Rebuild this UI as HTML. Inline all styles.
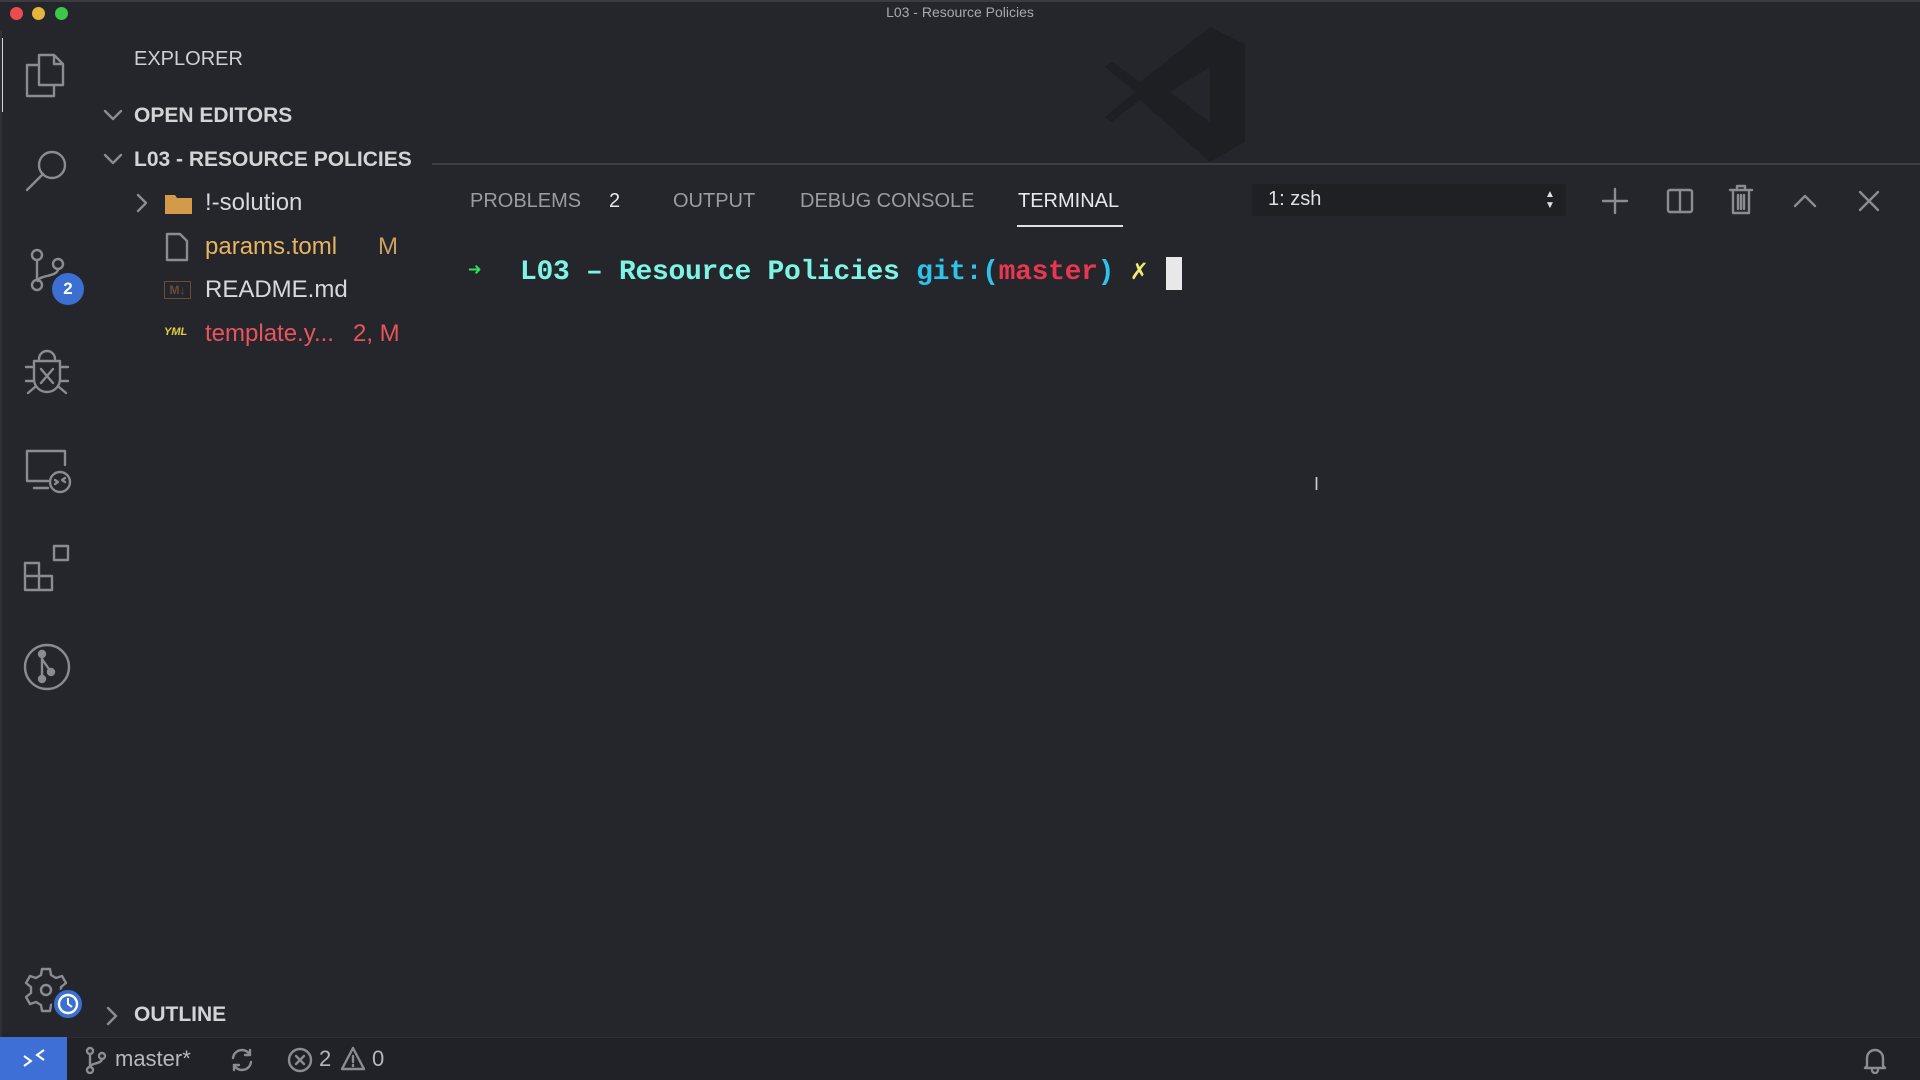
<!DOCTYPE html>
<html><head><meta charset="utf-8"><style>
*{margin:0;padding:0;box-sizing:border-box}
body{width:1920px;height:1080px;background:#24262c;font-family:"Liberation Sans",sans-serif;position:relative;overflow:hidden;color:#ccc}
.a{position:absolute;white-space:nowrap}
.ic{position:absolute;fill:none;stroke:#8a8c91;stroke-width:2.4;stroke-linecap:round;stroke-linejoin:round}
.sec{font-weight:bold;font-size:21px;color:#d4d4d6}
.row{font-size:24px;line-height:28px}
.tab{font-size:20px;color:#9a9ca0;top:190px}
.term{font-family:"Liberation Mono",monospace;font-weight:bold;font-size:28px;top:253px;letter-spacing:-0.3px}
</style></head><body>
<div class="a" style="left:0;top:0;width:1920px;height:30px;border-top:2px solid #3a3c42"></div>
<div class="a" style="left:10px;top:7px;width:13px;height:13px;border-radius:50%;background:#ee4b4f"></div>
<div class="a" style="left:32px;top:7px;width:13px;height:13px;border-radius:50%;background:#e6b43c"></div>
<div class="a" style="left:55px;top:7px;width:13px;height:13px;border-radius:50%;background:#3ec64a"></div>
<div class="a" style="left:0;width:1920px;top:4px;text-align:center;font-size:14px;color:#a8a9ad">L03 - Resource Policies</div>
<div class="a" style="left:0;top:38px;width:3px;height:74px;background:#d6d6d8"></div>
<div class="a" style="left:0;top:30px;width:2px;height:1008px;background:#2e3036"></div>
<svg class="a" style="left:1100px;top:22px" width="150" height="145" viewBox="0 0 150 145"><path d="M110 5 L145 22 L145 120 L110 140 L40 78 L12 100 L5 95 L35 70 L5 45 L12 40 L40 60 Z M110 45 L70 70 L110 100 Z" fill="#1d1f23" fill-rule="evenodd"/></svg>
<svg class="ic" style="left:22px;top:50px" width="50" height="50" viewBox="0 0 50 50" stroke="#c8c8ca"><path d="M17 5h15l9 9v21H17z M32 5v9h9 M17 15H5v31h27v-11"/></svg>
<svg class="ic" style="left:22px;top:145px" width="50" height="50" viewBox="0 0 50 50"><circle cx="30" cy="20" r="13"/><path d="M21 29L5 45"/></svg>
<svg class="ic" style="left:22px;top:245px" width="50" height="50" viewBox="0 0 50 50"><circle cx="15" cy="10" r="5"/><circle cx="36" cy="19" r="5"/><circle cx="15" cy="40" r="5"/><path d="M15 15v20 M36 24c0 8-20 6-20 12"/></svg>
<div class="a" style="left:52px;top:273px;width:32px;height:32px;border-radius:50%;background:#3c6fd2;color:#fff;font-weight:bold;font-size:17px;text-align:center;line-height:32px">2</div>
<svg class="ic" style="left:22px;top:347px" width="50" height="50" viewBox="0 0 50 50"><path d="M17 12a8 8 0 0 1 16 0 M12 14h26v18a13 13 0 0 1-26 0z M4 20h8 M38 20h8 M4 34h8 M38 34h8 M6 46l7-6 M44 46l-7-6 M19 22l12 14 M31 22l-12 14"/></svg>
<svg class="ic" style="left:22px;top:445px" width="50" height="50" viewBox="0 0 50 50"><path d="M26 36H5V6h38v14 M12 43h14"/><circle cx="38" cy="37" r="10"/><path d="M33 35l3 2-3 2 M43 33l-3 2 3 2"/></svg>
<svg class="ic" style="left:22px;top:543px" width="50" height="50" viewBox="0 0 50 50"><path d="M3 20h14v27H3z M3 33h27v14H17 M32 3h14v14H32z"/></svg>
<svg class="ic" style="left:22px;top:642px" width="50" height="50" viewBox="0 0 50 50"><circle cx="25" cy="25" r="22"/><path d="M20 12v25 M20 17l9 13"/><circle cx="20" cy="12" r="3" fill="#8a8c91"/><circle cx="29" cy="30" r="3" fill="#8a8c91"/><circle cx="20" cy="37" r="3" fill="#8a8c91"/></svg>
<svg class="ic" style="left:22px;top:966px" width="50" height="50" viewBox="0 0 50 50"><path d="M20 3h8l1 6 5 3 6-2 4 7-5 4v6l5 4-4 7-6-2-5 3-1 6h-8l-1-6-5-3-6 2-4-7 5-4v-6l-5-4 4-7 6 2 5-3z"/><circle cx="24" cy="24" r="5"/></svg>
<div class="a" style="left:52px;top:988px;width:32px;height:32px;border-radius:50%;background:#3c6fd2;border:2px solid #24262c"></div>
<svg class="a" style="left:56px;top:992px" width="24" height="24" viewBox="0 0 24 24"><circle cx="12" cy="12" r="9" fill="none" stroke="#fff" stroke-width="2.4"/><path d="M12 6v6l4 3" fill="none" stroke="#fff" stroke-width="2"/></svg>
<div class="a" style="left:134px;top:48px;font-size:20px;color:#d0d0d2">EXPLORER</div>
<svg class="ic" style="left:102px;top:105px" width="22" height="20" viewBox="0 0 22 20" stroke="#c8c8ca" stroke-width="2"><path d="M3 6l8 8 8-8"/></svg>
<div class="a sec" style="left:134px;top:104px">OPEN EDITORS</div>
<svg class="ic" style="left:102px;top:149px" width="22" height="20" viewBox="0 0 22 20" stroke="#c8c8ca" stroke-width="2"><path d="M3 6l8 8 8-8"/></svg>
<div class="a sec" style="left:134px;top:148px">L03 - RESOURCE POLICIES</div>
<svg class="ic" style="left:132px;top:192px" width="20" height="22" viewBox="0 0 20 22" stroke="#c8c8ca" stroke-width="2"><path d="M6 3l8 8-8 8"/></svg>
<svg class="a" style="left:165px;top:192px" width="27" height="22" viewBox="0 0 27 22"><path d="M0 3h10l2 3h15v16H0z" fill="#d39a4a"/></svg>
<div class="a row" style="left:205px;top:189px;color:#d8d8da">!-solution</div>
<svg class="ic" style="left:165px;top:232px" width="25" height="30" viewBox="0 0 25 30" stroke="#c8c8ca" stroke-width="2"><path d="M2 2h13l7 7v19H2z"/></svg>
<div class="a row" style="left:205px;top:233px;color:#e8b460">params.toml</div>
<div class="a row" style="left:378px;top:233px;color:#c9a062">M</div>
<div class="a" style="left:164px;top:281px;width:27px;height:18px;border:1px solid #6e4a38;color:#6e4a38;font-size:12px;font-weight:bold;text-align:center;line-height:16px">M↓</div>
<div class="a row" style="left:205px;top:276px;color:#d8d8da">README.md</div>
<div class="a" style="left:164px;top:326px;font-size:11px;font-weight:bold;color:#e0d040;font-style:italic">YML</div>
<div class="a row" style="left:205px;top:320px;color:#e8545c">template.y...</div>
<div class="a row" style="left:353px;top:320px;color:#e8545c">2, M</div>
<svg class="ic" style="left:102px;top:1005px" width="20" height="22" viewBox="0 0 20 22" stroke="#c8c8ca" stroke-width="2"><path d="M6 3l8 8-8 8"/></svg>
<div class="a sec" style="left:134px;top:1003px">OUTLINE</div>
<div class="a" style="left:432px;top:163px;width:1488px;height:2px;background:#3a3d44"></div>
<div class="a tab" style="left:470px">PROBLEMS</div>
<div class="a tab" style="left:609px;color:#e8e8ea">2</div>
<div class="a tab" style="left:673px">OUTPUT</div>
<div class="a tab" style="left:800px">DEBUG CONSOLE</div>
<div class="a tab" style="left:1018px;color:#e8e8ea">TERMINAL</div>
<div class="a" style="left:1017px;top:225px;width:106px;height:2px;background:#e0e0e2"></div>
<div class="a" style="left:1252px;top:184px;width:314px;height:32px;background:#1e2024"></div>
<div class="a" style="left:1268px;top:188px;font-size:20px;color:#e0e0e2">1: zsh</div>
<div class="a" style="left:1545px;top:189px;font-size:10px;color:#e0e0e2;line-height:11px">▲<br>▼</div>
<svg class="ic" style="left:1600px;top:186px" width="30" height="30" viewBox="0 0 30 30" stroke="#c8c8ca" stroke-width="2"><path d="M15 3v24 M3 15h24"/></svg>
<svg class="ic" style="left:1665px;top:186px" width="30" height="30" viewBox="0 0 30 30" stroke="#c8c8ca" stroke-width="2"><rect x="3" y="4" width="24" height="22" rx="2"/><path d="M15 4v22"/></svg>
<svg class="ic" style="left:1727px;top:184px" width="28" height="32" viewBox="0 0 28 32" stroke="#c8c8ca" stroke-width="2"><path d="M3 6h22 M10 6V2h8v4 M6 6v23h16V6 M11 11v14 M14 11v14 M17 11v14"/></svg>
<svg class="ic" style="left:1790px;top:186px" width="30" height="30" viewBox="0 0 30 30" stroke="#c8c8ca" stroke-width="2"><path d="M5 20l10-10 10 10"/></svg>
<svg class="ic" style="left:1854px;top:186px" width="30" height="30" viewBox="0 0 30 30" stroke="#c8c8ca" stroke-width="2"><path d="M6 6l18 18 M24 6L6 24"/></svg>
<div class="a term" style="left:468px;color:#2fe05a;font-size:22px;top:258px">➜</div>
<div class="a term" style="left:520px"><span style="color:#7ef4e4">L03 – Resource Policies</span> <span style="color:#2fc2ea">git:(</span><span style="color:#e8374e">master</span><span style="color:#2fc2ea">)</span> <span style="color:#f0ee70">✗</span></div>
<div class="a" style="left:1166px;top:257px;width:16px;height:33px;background:#e8e8e8"></div>
<div class="a" style="left:1314px;top:474px;font-size:18px;color:#ccc">I</div>
<div class="a" style="left:0;top:1037px;width:1920px;height:43px;background:#202227;border-top:1px solid #2c2e34"></div>
<div class="a" style="left:0;top:1037px;width:67px;height:43px;background:#3d6fd6"></div>
<svg class="a" style="left:20px;top:1046px" width="28" height="24" viewBox="0 0 28 24" fill="none" stroke="#fff" stroke-width="2"><path d="M4 20l7-5-7-5 M24 4l-7 5 7 5"/></svg>
<svg class="ic" style="left:84px;top:1046px" width="24" height="28" viewBox="0 0 24 28" stroke="#b8b8ba" stroke-width="2"><circle cx="6" cy="5" r="3"/><circle cx="18" cy="10" r="3"/><circle cx="6" cy="24" r="3"/><path d="M6 8v13 M18 13c0 5-12 4-12 8"/></svg>
<div class="a" style="left:115px;top:1046px;font-size:22px;color:#b8b8ba">master*</div>
<svg class="ic" style="left:228px;top:1046px" width="28" height="28" viewBox="0 0 28 28" stroke="#b8b8ba" stroke-width="2"><path d="M5 12a9 9 0 0 1 17-3 M23 16a9 9 0 0 1-17 3 M22 4v5h-5 M6 24v-5h5"/></svg>
<svg class="ic" style="left:287px;top:1047px" width="26" height="26" viewBox="0 0 26 26" stroke="#b8b8ba" stroke-width="2"><circle cx="13" cy="13" r="11"/><path d="M9 9l8 8 M17 9l-8 8"/></svg>
<div class="a" style="left:319px;top:1046px;font-size:22px;color:#b8b8ba">2</div>
<svg class="ic" style="left:340px;top:1046px" width="26" height="26" viewBox="0 0 26 26" stroke="#b8b8ba" stroke-width="2"><path d="M13 2L24 23H2z M13 10v6 M13 19v1"/></svg>
<div class="a" style="left:372px;top:1046px;font-size:22px;color:#b8b8ba">0</div>
<svg class="ic" style="left:1862px;top:1046px" width="26" height="28" viewBox="0 0 26 28" stroke="#b8b8ba" stroke-width="2"><path d="M5 20V12a8 8 0 0 1 16 0v8l2 2H3z M10 24a3 3 0 0 0 6 0"/></svg>
</body></html>
